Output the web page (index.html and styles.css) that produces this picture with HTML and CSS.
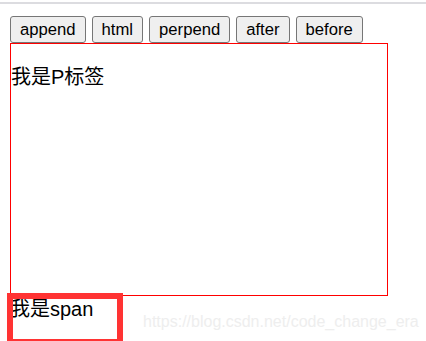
FILE: index.html
```html
<!DOCTYPE html>
<html>
<head>
<meta charset="utf-8">
<link rel="stylesheet" href="styles.css">
</head>
<body>
<div class="topline"></div>
<main class="page">
  <div class="buttons">
    <button class="btn">append</button>
    <button class="btn">html</button>
    <button class="btn">perpend</button>
    <button class="btn">after</button>
    <button class="btn">before</button>
  </div>
  <div class="box">
    <p class="para">我是P标签</p>
  </div>
  <span class="span-text">我是span</span>
</main>
<div class="highlight"></div>
<div class="watermark">https://blog.csdn.net/code_change_era</div>
</body>
</html>
```
FILE: styles.css
```css
html, body {
  margin: 0;
  padding: 0;
  background: #ffffff;
  overflow: hidden;
}
body {
  width: 426px;
  height: 341px;
  position: relative;
  font-family: "Liberation Sans", "Noto Sans CJK SC", sans-serif;
  color: #000;
}
.topline {
  margin-top: 2px;
  height: 2px;
  background: #dcdce0;
}
.page {
  padding: 12px 10px 0 10px;
}
.buttons {
  display: flex;
  gap: 6px;
  height: 27px;
}
.btn {
  box-sizing: border-box;
  height: 27px;
  padding: 0 9px;
  margin: 0;
  border: 1px solid #767676;
  border-radius: 3px;
  background: #efefef;
  font-family: "Liberation Sans", sans-serif;
  font-size: 16.67px;
  color: #000;
  line-height: 25px;
}
.box {
  width: 376px;
  height: 251px;
  border: 1px solid #ff0000;
}
.para {
  margin: 20px 0;
  font-size: 20px;
  line-height: 27px;
  font-family: "Liberation Sans", "Noto Sans CJK SC", sans-serif;
}
.span-text {
  display: block;
  font-size: 20px;
  line-height: 26px;
}
.highlight {
  position: absolute;
  left: 7px;
  top: 293px;
  width: 104px;
  height: 40px;
  border: 6px solid #ff3333;
}
.watermark {
  position: absolute;
  left: 143px;
  top: 313px;
  font-family: "Liberation Sans", sans-serif;
  font-size: 16px;
  color: #eeeeee;
  white-space: nowrap;
}
```
